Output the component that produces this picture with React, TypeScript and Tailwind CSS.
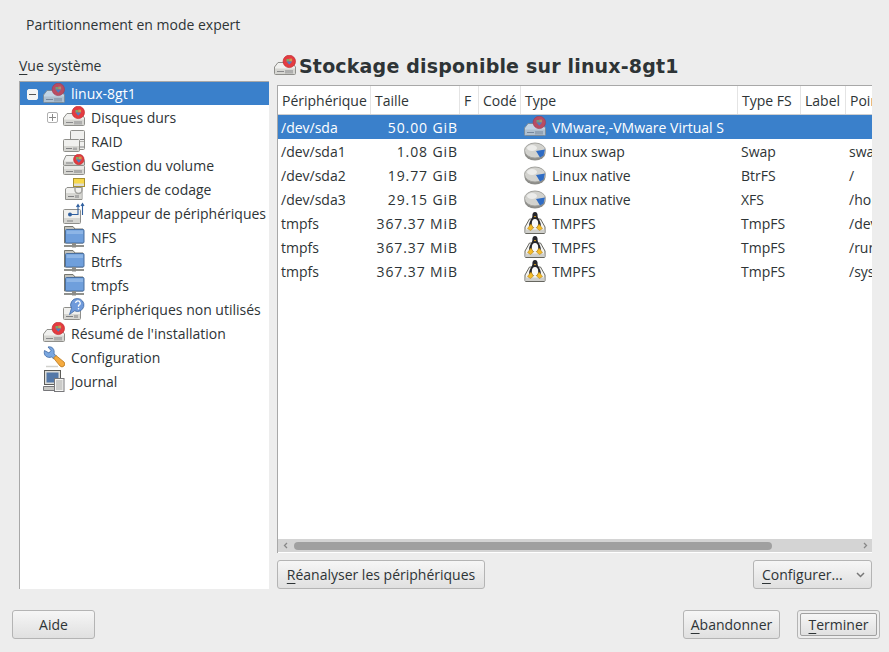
import React from 'react';

const DiskBody = () => (
  <g>
    <path d="M4 7.5 H18 L21.5 12 V18.5 a1 1 0 0 1 -1 1 H1.5 a1 1 0 0 1 -1 -1 V12 Z" fill="#f0f0ee" stroke="#8f8f8b" />
    <path d="M1 13.5 H21 V19 H1 Z" fill="#d6d6d2" />
    <path d="M3 16.5 H10 M12 15 V18.5 M14 15 V18.5 M16 15 V18.5 M18 15 V18.5" stroke="#808082" strokeWidth="0.9" />
  </g>
);

const Badge = ({ cx = 15.3, cy = 6.4, r = 6.2 }: { cx?: number; cy?: number; r?: number }) => (
  <g>
    <circle cx={cx} cy={cy} r={r} fill="#e43b40" stroke="#c0292f" strokeWidth="0.7" />
    <path d={`M${cx - 2.8} ${cy - 2.4} h2.8 v2.6 h-2.8 Z`} fill="#7fa968" />
    <path d={`M${cx} ${cy - 2.8} h2.8 v3 h-2.8 Z`} fill="#d09a50" />
    <path d={`M${cx - 2.8} ${cy + 0.2} h5.6 l-2.8 3.2 Z`} fill="#4f7fc4" />
  </g>
);

const DiskIcon = () => (
  <svg width="22" height="22" viewBox="0 0 22 22" className="shrink-0">
    <DiskBody />
    <Badge />
  </svg>
);

const RaidIcon = () => (
  <svg width="22" height="22" viewBox="0 0 22 22" className="shrink-0">
    <rect x="7.5" y="0.5" width="14" height="19" rx="1" fill="#f0f0ee" stroke="#8f8f8b" />
    <path d="M17 9.5 H21 M17 17 H21" stroke="#808082" />
    <path d="M8 11.5 H21" stroke="#b4b4b0" />
    <rect x="0.5" y="9.5" width="16" height="12" rx="1" fill="#f0f0ee" stroke="#8f8f8b" />
    <path d="M1 16 H16 V21 H1 Z" fill="#d6d6d2" />
    <path d="M3 18.5 H9 M11 17.5 V20 M13 17.5 V20" stroke="#808082" />
  </svg>
);

const VolumeIcon = () => (
  <svg width="22" height="22" viewBox="0 0 22 22" className="shrink-0">
    <path d="M3 1.5 H19 L21.5 7 V11 H0.5 V7 Z" fill="#f0f0ee" stroke="#8f8f8b" />
    <path d="M1 7.5 H21 V10.5 H1 Z" fill="#d6d6d2" />
    <rect x="0.5" y="11.5" width="21" height="9" rx="1" fill="#e8e8e6" stroke="#8f8f8b" />
    <path d="M1 15 H21 V20 H1 Z" fill="#d6d6d2" />
    <path d="M3 9 H10 M3 17.5 H10 M12 16 V19 M14 16 V19 M16 16 V19 M18 16 V19" stroke="#808082" />
    <Badge cx={15.8} cy={5.4} r={5.2} />
  </svg>
);

const CryptIcon = () => (
  <svg width="22" height="22" viewBox="0 0 22 22" className="shrink-0">
    <path d="M4 9.5 H19 V21.5 H2.5 V11 Z" fill="#f0f0ee" stroke="#8f8f8b" />
    <path d="M3 15 H18.5 V21 H3 Z" fill="#d6d6d2" />
    <path d="M5 18.5 H11 M13 17 V20 M15 17 V20" stroke="#808082" />
    <path d="M12 9 v3 a3.5 3.5 0 0 0 7 0 V8" fill="none" stroke="#a2a29e" strokeWidth="1.4" />
    <rect x="10.5" y="0.5" width="11" height="8" fill="#f7d84b" stroke="#a89030" />
    <rect x="11" y="5.5" width="10" height="2.5" fill="#dcdcd8" />
  </svg>
);

const MapperIcon = () => (
  <svg width="22" height="22" viewBox="0 0 22 22" className="shrink-0">
    <rect x="0.5" y="7.5" width="17" height="14" rx="1" fill="#f0f0ee" stroke="#8f8f8b" />
    <path d="M1 16 H17 V21 H1 Z" fill="#d6d6d2" />
    <circle cx="7" cy="12.5" r="2" fill="#2f5f9f" />
    <path d="M7 12.5 H15 V3 M19.5 13 V2 M13.5 5 L15 2.5 L16.5 5 M18 4 L19.5 1.5 L21 4" fill="none" stroke="#2f5f9f" strokeWidth="1.1" />
    <path d="M4 19 H10" stroke="#808082" />
  </svg>
);

const FolderNetIcon = () => (
  <svg width="22" height="22" viewBox="0 0 22 22" className="shrink-0">
    <path d="M1.5 0.5 H10 L12 3 H20 V17 H1.5 Z" fill="#c4c4be" stroke="#77776f" />
    <rect x="2.5" y="3.5" width="18.5" height="13.5" rx="1" fill="#6f9fdc" stroke="#4a6f9f" />
    <path d="M3.5 4.5 H20 V8 H3.5 Z" fill="#8db5e6" />
    <path d="M1 20 H21" stroke="#6c6c66" strokeWidth="1.5" />
    <rect x="9" y="17" width="4" height="4.5" fill="#8c8c88" />
  </svg>
);

const UnusedIcon = () => (
  <svg width="22" height="22" viewBox="0 0 22 22" className="shrink-0">
    <rect x="0.5" y="9.5" width="17" height="12" rx="1" fill="#f0f0ee" stroke="#8f8f8b" />
    <path d="M1 16 H17 V21 H1 Z" fill="#d6d6d2" />
    <path d="M3 18.5 H10 M12 17 V20 M14 17 V20" stroke="#808082" />
    <path d="M14.5 0.5 a6.5 6.5 0 1 1 -3 12.3 l-5 3.7 l2 -6.2 a6.5 6.5 0 0 1 6 -9.8 Z" fill="#6f9adb" stroke="#3f68a3" strokeWidth="0.8" />
    <path d="M12.6 5 a2.3 2.3 0 1 1 2.9 2.4 v1.4" fill="none" stroke="#fff" strokeWidth="1.2" />
    <circle cx="15.5" cy="10.7" r="0.8" fill="#fff" />
  </svg>
);

const WrenchIcon = () => (
  <svg width="22" height="22" viewBox="0 0 22 22" className="shrink-0">
    <path d="M5 1 L8 4.5 L6 7 L1.5 4.5 C0 10 5 12.5 8.5 11 L11 13 L13.5 10 L11 8 C12 3 9 0 5 1 Z" fill="#7aa7e0" stroke="#3f68a3" strokeWidth="0.8" />
    <path d="M10.5 12 L13 9.5 L21 16 a2.5 2.5 0 0 1 -4 4 Z" fill="#f5ab40" stroke="#b8761c" strokeWidth="0.8" />
    <path d="M3 20.5 H15" stroke="#d2d2ce" strokeWidth="1.5" />
  </svg>
);

const LogIcon = () => (
  <svg width="22" height="22" viewBox="0 0 22 22" className="shrink-0">
    <rect x="1.5" y="0.5" width="16" height="14" fill="#dcdcd8" stroke="#5c5c58" />
    <rect x="3.5" y="2.5" width="12" height="10" fill="#5478a8" />
    <path d="M0.5 16.5 H12 V20.5 H0.5 Z" fill="#c8c8c4" stroke="#77777a" />
    <rect x="11.5" y="8.5" width="9.5" height="13" fill="#f6f6f4" stroke="#77777a" />
    <path d="M13 11 H19.5 M13 13 H19.5 M13 15 H19.5 M13 17 H19.5 M13 19 H19.5" stroke="#a2a2a0" />
  </svg>
);

const SwapIcon = () => (
  <svg width="22" height="22" viewBox="0 0 22 22" className="shrink-0">
    <ellipse cx="11" cy="13" rx="10.5" ry="7.5" fill="#8c8c88" />
    <ellipse cx="11" cy="10.5" rx="10.5" ry="7.5" fill="#d2d2ce" stroke="#a2a29e" />
    <ellipse cx="8" cy="8" rx="5" ry="3" fill="#ececea" />
    <path d="M12 11 L21 9.5 L19.5 15.5 L16 17.5 Z" fill="#2f6cc4" />
  </svg>
);

const TuxIcon = () => (
  <svg width="22" height="22" viewBox="0 0 22 22" className="shrink-0">
    <path d="M5.5 7 H16.5 L21 15 V20.5 a1 1 0 0 1 -1 1 H2 a1 1 0 0 1 -1 -1 V15 Z" fill="#f4f4f2" stroke="#66665f" />
    <path d="M1.5 17.5 H20.5 V21 H1.5 Z" fill="#cfcfcb" />
    <path d="M11 0 c-2 0 -2.8 2 -2.6 4 c0.2 2 -3.2 5 -3.2 9 c0 1.8 1.2 3 5.8 3 s5.8 -1.2 5.8 -3 c0 -4 -3.4 -7 -3.2 -9 c0.2 -2 -0.6 -4 -2.6 -4 Z" fill="#26262a" />
    <ellipse cx="11" cy="11.5" rx="3.2" ry="4.5" fill="#fafafa" />
    <path d="M9.8 4 H12.2 L11 5.5 Z" fill="#f0b020" />
    <path d="M3.5 16.5 L7 12 L9.5 16 L6.5 18.5 Z M18.5 16.5 L15 12 L12.5 16 L15.5 18.5 Z" fill="#f5bb28" stroke="#a87a10" strokeWidth="0.5" />
  </svg>
);

const Under = ({ children }: { children: React.ReactNode }) => (
  <span className="underline decoration-1 underline-offset-[3px]">{children}</span>
);

const Button = ({ className, children }: { className: string; children: React.ReactNode }) => (
  <button className={`h-[29px] rounded-[3px] border border-[#b4b4b4] bg-gradient-to-b from-[#f6f6f6] to-[#e0e0e0] flex items-center text-[#2e3436] ${className}`}>
    {children}
  </button>
);

const treeItems = [
  { level: 0, icon: <DiskIcon />, label: 'linux-8gt1', expander: 'minus', selected: true },
  { level: 1, icon: <DiskIcon />, label: 'Disques durs', expander: 'plus' },
  { level: 1, icon: <RaidIcon />, label: 'RAID' },
  { level: 1, icon: <VolumeIcon />, label: 'Gestion du volume' },
  { level: 1, icon: <CryptIcon />, label: 'Fichiers de codage' },
  { level: 1, icon: <MapperIcon />, label: 'Mappeur de périphériques' },
  { level: 1, icon: <FolderNetIcon />, label: 'NFS' },
  { level: 1, icon: <FolderNetIcon />, label: 'Btrfs' },
  { level: 1, icon: <FolderNetIcon />, label: 'tmpfs' },
  { level: 1, icon: <UnusedIcon />, label: 'Périphériques non utilisés' },
  { level: 0, icon: <DiskIcon />, label: "Résumé de l'installation" },
  { level: 0, icon: <WrenchIcon />, label: 'Configuration' },
  { level: 0, icon: <LogIcon />, label: 'Journal' },
];

const columns = [
  { title: 'Périphérique', width: 'w-[93px]' },
  { title: 'Taille', width: 'w-[89px]' },
  { title: 'F', width: 'w-[19px]' },
  { title: 'Codé', width: 'w-[42px]' },
  { title: 'Type', width: 'w-[217px]' },
  { title: 'Type FS', width: 'w-[63px]' },
  { title: 'Label', width: 'w-[45px]' },
  { title: 'Point de montage', width: 'flex-1' },
];

const rows = [
  { dev: '/dev/sda', size: '50.00 GiB', icon: <DiskIcon />, type: 'VMware,-VMware Virtual S', fs: '', mount: '', selected: true },
  { dev: '/dev/sda1', size: '1.08 GiB', icon: <SwapIcon />, type: 'Linux swap', fs: 'Swap', mount: 'swap' },
  { dev: '/dev/sda2', size: '19.77 GiB', icon: <SwapIcon />, type: 'Linux native', fs: 'BtrFS', mount: '/' },
  { dev: '/dev/sda3', size: '29.15 GiB', icon: <SwapIcon />, type: 'Linux native', fs: 'XFS', mount: '/home' },
  { dev: 'tmpfs', size: '367.37 MiB', icon: <TuxIcon />, type: 'TMPFS', fs: 'TmpFS', mount: '/dev/shm' },
  { dev: 'tmpfs', size: '367.37 MiB', icon: <TuxIcon />, type: 'TMPFS', fs: 'TmpFS', mount: '/run' },
  { dev: 'tmpfs', size: '367.37 MiB', icon: <TuxIcon />, type: 'TMPFS', fs: 'TmpFS', mount: '/sys/fs' },
];

export default function App() {
  return (
    <div className="w-[889px] h-[652px] overflow-hidden bg-[#ededed] text-[#2e3436] text-[14px] font-['Open_Sans',sans-serif] flex flex-col">
      <div className="h-[56px] pl-[26px] pt-[15px] leading-[20px]">Partitionnement en mode expert</div>

      <div className="h-[533px] flex pl-[19px]">
        {/* Tree */}
        <div className="w-[250px] flex flex-col">
          <div className="h-[25px] leading-[20px]"><Under>V</Under>ue système</div>
          <div className="flex-1 bg-white border-l border-t border-[#a8a8a8]">
            {treeItems.map((item) => (
              <div
                key={item.label}
                className={`flex items-center ${item.selected ? 'h-[23px] bg-[#3a80cb] text-white' : 'h-[24px]'} ${item.level === 1 ? 'pl-[43px]' : 'pl-[23px]'}`}
              >
                <div className="w-[0px] relative">
                  {item.expander && (
                    <div className={`absolute left-[-16px] top-[-5px] w-[11px] h-[11px] rounded-[2px] border flex items-center justify-center ${item.selected ? 'bg-[#f4f4f4] border-[#f4f4f4]' : 'bg-white border-[#b0b0b0]'}`}>
                      <div className={`w-[7px] h-[1px] ${item.selected ? 'bg-[#555]' : 'bg-[#888]'}`} />
                      {item.expander === 'plus' && <div className="absolute w-[1px] h-[7px] bg-[#888]" />}
                    </div>
                  )}
                </div>
                <div className={item.selected ? 'opacity-75' : ''}>{item.icon}</div>
                <span className="ml-[6px] whitespace-nowrap">{item.label}</span>
              </div>
            ))}
          </div>
        </div>

        {/* Right panel */}
        <div className="w-[595px] ml-[8px] flex flex-col">
          <div className="h-[29px] flex items-start">
            <div className="-ml-[3px] -mt-[1px]"><DiskIcon /></div>
            <h1 className="ml-[3px] -mt-[4px] text-[19px] leading-[28px] font-bold tracking-[0.18px] font-['DejaVu_Sans',sans-serif] whitespace-nowrap">Stockage disponible sur linux-8gt1</h1>
          </div>

          <div className="h-[468px] bg-white border-l border-t border-[#a8a8a8] flex flex-col overflow-hidden">
            <div className="h-[29px] flex border-b border-[#cfcfcf] shrink-0">
              {columns.map((col) => (
                <div key={col.title} className={`${col.width} shrink-0 overflow-hidden whitespace-nowrap pl-[4px] flex items-center border-r border-[#e4e4e4] last:border-r-0`}>
                  {col.title}
                </div>
              ))}
            </div>
            <div className="flex-1">
              {rows.map((row, i) => (
                <div key={i} className={`h-[24px] flex items-center whitespace-nowrap ${row.selected ? 'bg-[#3a80cb] text-white' : ''}`}>
                  <div className="w-[93px] pl-[3px] pt-[1px]">{row.dev}</div>
                  <div className="w-[89px] pr-[2px] pt-[1px] text-right tracking-[0.9px]">{row.size}</div>
                  <div className="w-[61px]" />
                  <div className="w-[217px] pl-[3px] flex items-center">
                    <div className={row.selected ? 'opacity-75' : ''}>{row.icon}</div>
                    <span className="ml-[6px] pt-[1px] overflow-hidden">{row.type}</span>
                  </div>
                  <div className="w-[63px] pl-[3px] pt-[1px]">{row.fs}</div>
                  <div className="w-[45px]" />
                  <div className="flex-1 pl-[3px] pt-[1px] overflow-hidden">{row.mount}</div>
                </div>
              ))}
            </div>
            <div className="h-[14px] bg-[#d4d4d4] flex items-center shrink-0 relative border-b border-white">
              <svg width="5" height="7" viewBox="0 0 5 7" className="absolute left-[5px]"><path d="M4 1 L1.5 3.5 L4 6" fill="none" stroke="#888" strokeWidth="1.3" /></svg>
              <div className="ml-[16px] w-[478px] h-[8px] rounded-full bg-[#a0a0a0]" />
              <svg width="5" height="7" viewBox="0 0 5 7" className="absolute right-[4px]"><path d="M1 1 L3.5 3.5 L1 6" fill="none" stroke="#888" strokeWidth="1.3" /></svg>
            </div>
          </div>

          <div className="h-[36px] flex items-end justify-between">
            <Button className="w-[208px] justify-center"><Under>R</Under>éanalyser les périphériques</Button>
            <Button className="w-[119px] pl-[8px] pr-[6px] justify-between">
              <span><Under>C</Under>onfigurer...</span>
              <svg width="9" height="6" viewBox="0 0 9 6"><path d="M1 1 L4.5 4.5 L8 1" fill="none" stroke="#777" strokeWidth="1.5" /></svg>
            </Button>
          </div>
        </div>
      </div>

      <div className="flex items-start pt-[21px] pl-[12px] pr-[9px]">
        <Button className="w-[83px] justify-center">Aide</Button>
        <div className="flex-1" />
        <Button className="w-[97px] justify-center"><Under>A</Under>bandonner</Button>
        <div className="ml-[17px] w-[83px] h-[29px] rounded-[3px] border border-[#b4b4b4] p-[2px] bg-[#ededed]">
          <div className="w-full h-full border border-[#a0a0a0] rounded-[2px] bg-gradient-to-b from-[#f6f6f6] to-[#e0e0e0] flex items-center justify-center">
            <span><Under>T</Under>erminer</span>
          </div>
        </div>
      </div>
    </div>
  );
}
